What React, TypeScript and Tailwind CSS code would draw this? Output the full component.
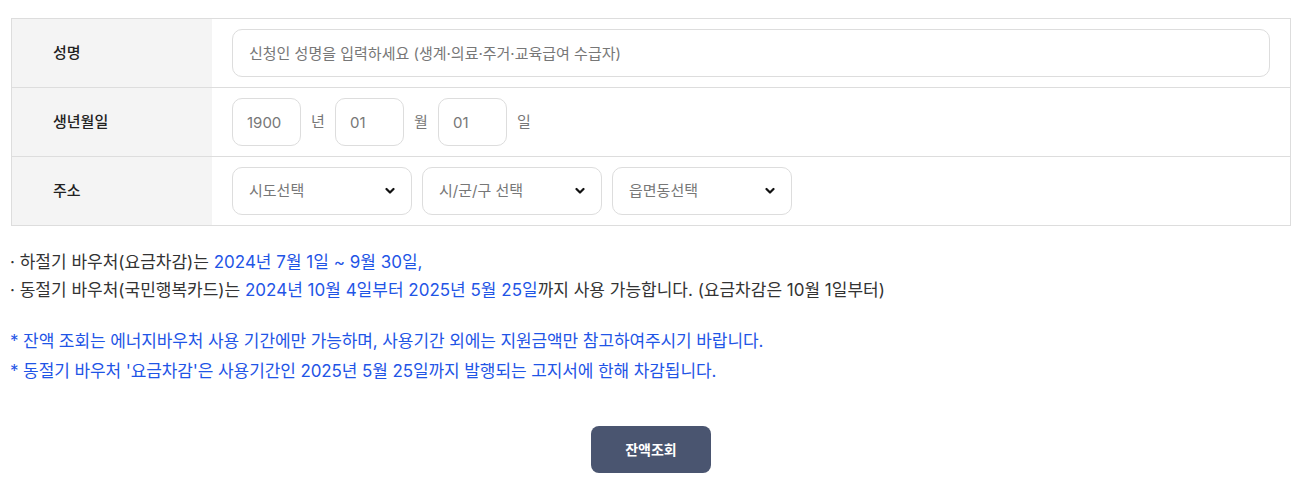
import { useState } from 'react';

const font = { fontFamily: 'Inter, "Noto Sans CJK KR", "Noto Sans", sans-serif' };

function Chevron() {
  return (
    <svg width="10" height="7" viewBox="0 0 10 7" className="pointer-events-none absolute right-[17px] top-1/2 -translate-y-1/2">
      <path d="M1.5 1.5 L5 5 L8.5 1.5" fill="none" stroke="#111" strokeWidth="2.2" strokeLinecap="round" strokeLinejoin="round" />
    </svg>
  );
}

function SelectBox({ label }: { label: string }) {
  return (
    <div className="relative w-[180px]">
      <select
        defaultValue=""
        className="h-[48px] w-full appearance-none rounded-[10px] border border-[#dddddd] bg-white pl-4 pr-8 text-[15px] text-[#777777] outline-none"
      >
        <option value="">{label}</option>
      </select>
      <Chevron />
    </div>
  );
}

export default function App() {
  const [name, setName] = useState('');
  const [year, setYear] = useState('1900');
  const [month, setMonth] = useState('01');
  const [day, setDay] = useState('01');

  const rows = [
    {
      label: '성명',
      body: (
        <input
          value={name}
          onChange={e => setName(e.target.value)}
          placeholder="신청인 성명을 입력하세요 (생계·의료·주거·교육급여 수급자)"
          className="h-[48px] w-full rounded-[10px] border border-[#dddddd] px-4 text-[15px] text-[#333] outline-none placeholder:text-[#777777]"
        />
      ),
    },
    {
      label: '생년월일',
      body: (
        <div className="flex items-center gap-[10px] text-[15px] text-[#777777]">
          <input value={year} onChange={e => setYear(e.target.value)} className="h-[48px] w-[69px] rounded-[10px] border border-[#dddddd] px-[14px] text-[#777777] outline-none" />
          <span className="w-[14px]">년</span>
          <input value={month} onChange={e => setMonth(e.target.value)} className="h-[48px] w-[69px] rounded-[10px] border border-[#dddddd] px-[14px] text-[#777777] outline-none" />
          <span className="w-[14px]">월</span>
          <input value={day} onChange={e => setDay(e.target.value)} className="h-[48px] w-[69px] rounded-[10px] border border-[#dddddd] px-[14px] text-[#777777] outline-none" />
          <span className="w-[14px]">일</span>
        </div>
      ),
    },
    {
      label: '주소',
      body: (
        <div className="flex items-center gap-[10px]">
          <SelectBox label="시도선택" />
          <SelectBox label="시/군/구 선택" />
          <SelectBox label="읍면동선택" />
        </div>
      ),
    },
  ];

  return (
    <div className="min-h-screen bg-white pt-[18px]" style={font}>
      <div className="ml-[11px] mr-[14px] border border-[#dddddd]">
        {rows.map((row, i) => (
          <div key={row.label} className={`flex ${i > 0 ? 'border-t border-[#dddddd]' : ''}`}>
            <div className="flex w-[200px] shrink-0 items-center bg-[#f4f4f4] pl-[41px] text-[15px] font-medium text-[#222]">
              {row.label}
            </div>
            <div className="flex-1 px-[20px] py-[10px]">{row.body}</div>
          </div>
        ))}
      </div>

      <div className="mt-[22px] pl-[10px] text-[17px] leading-[28px] text-[#333]">
        <p>
          · 하절기 바우처(요금차감)는 <span className="text-[#1f55e6]">2024년 7월 1일 ~ 9월 30일,</span>
        </p>
        <p>
          · 동절기 바우처(국민행복카드)는 <span className="text-[#1f55e6]">2024년 10월 4일부터 2025년 5월 25일</span>까지 사용 가능합니다. (요금차감은 10월 1일부터)
        </p>
        <div className="mt-[22px] text-[#1f55e6] leading-[30px] tracking-[-0.1px]">
          <p>* 잔액 조회는 에너지바우처 사용 기간에만 가능하며, 사용기간 외에는 지원금액만 참고하여주시기 바랍니다.</p>
          <p>* 동절기 바우처 '요금차감'은 사용기간인 2025년 5월 25일까지 발행되는 고지서에 한해 차감됩니다.</p>
        </div>
      </div>

      <div className="mt-[40px] flex justify-center pr-[3px]">
        <button className="h-[47px] w-[120px] rounded-[8px] bg-[#4a5570] text-[14px] font-bold text-white">
          잔액조회
        </button>
      </div>
    </div>
  );
}
